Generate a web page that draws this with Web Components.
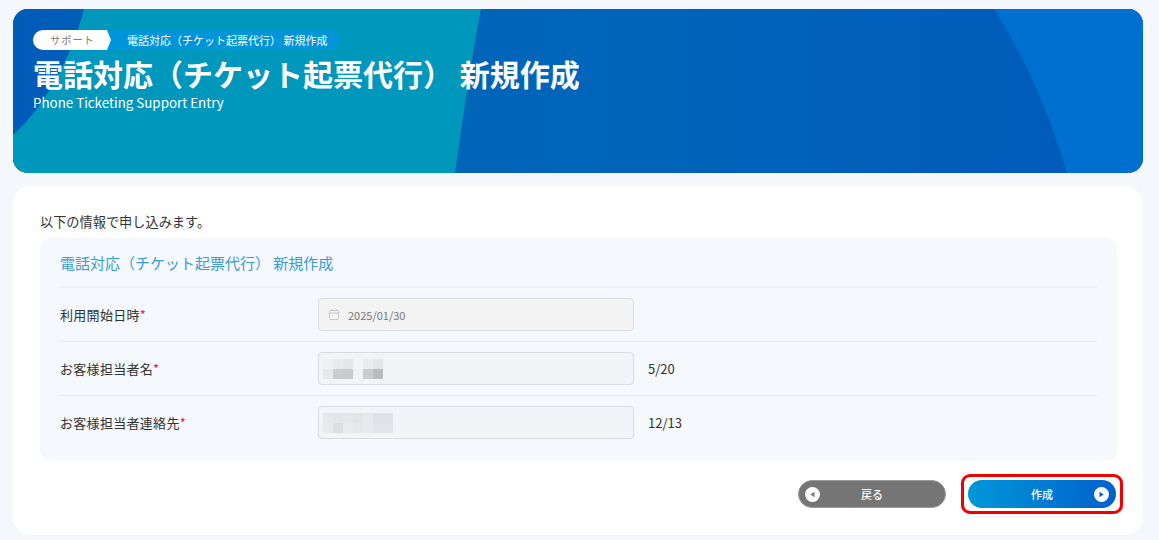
<!DOCTYPE html>
<html lang="ja">
<head>
<meta charset="utf-8">
<title>電話対応（チケット起票代行） 新規作成</title>
<style>
  html, body { margin: 0; height: 100%; }
  body {
    background: #f4f8fc;
    font-family: "Noto Sans CJK JP", "Noto Sans", sans-serif;
    color: #333;
    overflow: hidden;
  }
  #page {
    display: flex;
    flex-direction: column;
    gap: 13px;
    padding: 9px 16px 0 13px;
  }
</style>
</head>
<body>
<div id="page">
  <page-banner crumb="サポート" current="電話対応（チケット起票代行） 新規作成" sub="Phone Ticketing Support Entry">電話対応（チケット起票代行） 新規作成</page-banner>
  <entry-card lead="以下の情報で申し込みます。">
    <form-panel heading="電話対応（チケット起票代行） 新規作成">
      <form-row label="利用開始日時">
        <text-box date value="2025/01/30"></text-box>
      </form-row>
      <form-row label="お客様担当者名" count="5/20">
        <text-box><mosaic-blur cols="6" cells="eef0f1,e8eaeb,e4e6e8,f3f4f5,e9ebec,e3e5e7;e6e8e9,c9cdd0,c7cbce,f1f2f1,c8cccf,b9bcbd"></mosaic-blur></text-box>
      </form-row>
      <form-row label="お客様担当者連絡先" count="12/13">
        <text-box><mosaic-blur cols="7" cells="e6e8eb,e3e6ea,e6e7e9,e2e4e8,e7e9ec,dfe2e6,dfe2e6;e8eaec,dcdfe2,e9ebec,e5e7ea,e8eaed,e2e4e7,e2e4e7"></mosaic-blur></text-box>
      </form-row>
    </form-panel>
    <div slot="actions" style="display:contents">
      <pill-button kind="back">戻る</pill-button>
      <marked-box><pill-button kind="next">作成</pill-button></marked-box>
    </div>
  </entry-card>
</div>

<script>
class PageBanner extends HTMLElement {
  constructor() {
    super();
    this.attachShadow({ mode: 'open' });
    this.shadowRoot.innerHTML = `
      <style>
        :host {
          display: block;
          position: relative;
          height: 164px;
          border-radius: 15px;
          overflow: hidden;
          background: #0060ba;
          color: #fff;
        }
        svg { position: absolute; inset: 0; width: 100%; height: 100%; }
        .content { position: relative; padding: 21px 0 0 20px; }
        .crumbs { display: flex; height: 20px; font-size: 11px; line-height: 20px; }
        .home {
          position: relative;
          z-index: 1;
          width: 74px;
          padding-left: 17px;
          box-sizing: border-box;
          background: #fff;
          color: #808080;
          font-size: 10.5px;
          letter-spacing: .6px;
          border-radius: 10px 0 0 10px;
        }
        .home::after {
          content: "";
          position: absolute;
          left: 100%;
          top: 0;
          border-left: 4px solid #fff;
          border-top: 10px solid transparent;
          border-bottom: 10px solid transparent;
        }
        .now {
          margin-left: -2px;
          padding: 0 14px 0 22px;
          background: #0095d8;
          border-radius: 0 10px 10px 0;
        }
        h1 { margin: 3px 0 0; font-size: 30px; line-height: 40px; font-weight: 700; }
        p { margin: 1px 0 0; font-size: 13.35px; line-height: 18px; }
      </style>
      <svg viewBox="0 0 1130 164" preserveAspectRatio="none" aria-hidden="true">
        <defs>
          <linearGradient id="deep" x1="0" x2="1" y1="0" y2="0">
            <stop offset="0" stop-color="#005cb8"/>
            <stop offset=".5" stop-color="#0066ba"/>
            <stop offset="1" stop-color="#005abb"/>
          </linearGradient>
        </defs>
        <rect width="1130" height="164" fill="url(#deep)"/>
        <path d="M71 0H468C457 55 450 110 442 164H0V126C30 100 58 50 71 0Z" fill="#0097bd"/>
        <path d="M981 0H1130V164H1054C1035 100 1012 50 981 0Z" fill="#0070d0"/>
      </svg>
      <div class="content">
        <div class="crumbs">
          <span class="home">${this.getAttribute('crumb')}</span>
          <span class="now">${this.getAttribute('current')}</span>
        </div>
        <h1><slot></slot></h1>
        <p>${this.getAttribute('sub')}</p>
      </div>
    `;
  }
}

class EntryCard extends HTMLElement {
  constructor() {
    super();
    this.attachShadow({ mode: 'open' });
    this.shadowRoot.innerHTML = `
      <style>
        :host {
          display: block;
          height: 349px;
          box-sizing: border-box;
          padding: 26px 26px 0 27px;
          background: #fff;
          border-radius: 18px;
        }
        .lead { font-size: 13.2px; line-height: 19px; color: #333; margin-bottom: 7px; height: 19px; }
        .actions {
          display: flex;
          justify-content: flex-end;
          align-items: center;
          gap: 15px;
          margin: 13px -6px 0 0;
        }
      </style>
      <div class="lead">${this.getAttribute('lead')}</div>
      <slot></slot>
      <div class="actions"><slot name="actions"></slot></div>
    `;
  }
}

class FormPanel extends HTMLElement {
  constructor() {
    super();
    this.attachShadow({ mode: 'open' });
    this.shadowRoot.innerHTML = `
      <style>
        :host {
          display: block;
          height: 223px;
          box-sizing: border-box;
          padding: 0 20px;
          background: #f5f8fc;
          border-radius: 10px;
        }
        h2 {
          margin: 0;
          height: 50px;
          box-sizing: border-box;
          border-bottom: 2px solid #eef2f6;
          font-size: 15px;
          font-weight: 400;
          line-height: 50px;
          color: #3c9ad6;
        }
      </style>
      <h2>${this.getAttribute('heading')}</h2>
      <slot></slot>
    `;
  }
}

class FormRow extends HTMLElement {
  constructor() {
    super();
    this.attachShadow({ mode: 'open' });
    const count = this.getAttribute('count');
    this.shadowRoot.innerHTML = `
      <style>
        :host {
          display: flex;
          align-items: center;
          height: 54px;
          box-sizing: border-box;
          border-bottom: 1.5px solid #e9ecef;
        }
        :host(:last-child) { border-bottom-color: transparent; }
        .label { width: 258px; font-size: 13px; letter-spacing: .3px; color: #333; }
        .label b { color: #e8204a; font-weight: 400; }
        .count { margin-left: 14px; font-size: 13px; color: #333; }
      </style>
      <div class="label">${this.getAttribute('label')}<b>*</b></div>
      <slot></slot>
      ${count ? `<div class="count">${count}</div>` : ''}
    `;
  }
}

class TextBox extends HTMLElement {
  constructor() {
    super();
    this.attachShadow({ mode: 'open' });
    const isDate = this.hasAttribute('date');
    this.shadowRoot.innerHTML = `
      <style>
        :host {
          display: flex;
          align-items: center;
          gap: 10px;
          width: 316px;
          height: 33px;
          box-sizing: border-box;
          padding: 0 4px;
          background: #f2f4f7;
          border: 1.5px solid #d9dcdf;
          border-radius: 4px;
        }
        :host([date]) { background: #f3f3f3; padding-left: 10px; gap: 9px; }
        svg { width: 10px; height: 11px; flex: none; }
        span { font-size: 11px; color: #777; }
      </style>
      ${isDate ? `<svg viewBox="0 0 10 11" fill="none" stroke="#c8c8c8" aria-hidden="true">
        <rect x=".5" y="1.5" width="9" height="9" rx="1"/>
        <path d="M.5 4h9M3 0v2M7 0v2"/>
      </svg>` : ''}
      ${isDate ? `<span>${this.getAttribute('value')}</span>` : ''}
      <slot></slot>
    `;
  }
}

// stands in for the pixelated personal data
class MosaicBlur extends HTMLElement {
  constructor() {
    super();
    this.attachShadow({ mode: 'open' });
    const rows = this.getAttribute('cells').split(';').map((r) => r.split(','));
    const cells = rows.flat().map((c) => `<i style="background:#${c}"></i>`).join('');
    this.shadowRoot.innerHTML = `
      <style>
        :host {
          display: grid;
          grid-template-columns: repeat(${this.getAttribute('cols')}, 10px);
          grid-auto-rows: 10px;
        }
      </style>
      ${cells}
    `;
  }
}

class PillButton extends HTMLElement {
  constructor() {
    super();
    this.attachShadow({ mode: 'open' });
    const isBack = this.getAttribute('kind') === 'back';
    this.shadowRoot.innerHTML = `
      <style>
        :host {
          display: flex;
          align-items: center;
          justify-content: space-between;
          width: 148px;
          height: 28px;
          box-sizing: border-box;
          padding: 0 7px;
          border-radius: 14px;
          color: #fff;
          font-size: 11px;
          font-weight: 500;
          background: linear-gradient(90deg, #0098d8, #0060cc);
          cursor: pointer;
        }
        :host([kind="back"]) { background: #757575; border: 1px solid #9a9a9a; padding: 0 6px; }
        svg { width: 15px; height: 15px; flex: none; }
        .gap { width: 15px; }
      </style>
      ${isBack ? `<svg viewBox="0 0 15 15" aria-hidden="true"><circle cx="7.5" cy="7.5" r="7.5" fill="#fff"/><path d="M9.5 4.8v5.4L5.3 7.5z" fill="#757575"/></svg>` : '<span class="gap"></span>'}
      <slot></slot>
      ${isBack ? '<span class="gap"></span>' : `<svg viewBox="0 0 15 15" aria-hidden="true"><circle cx="7.5" cy="7.5" r="7.5" fill="#fff"/><path d="M5.5 4.8v5.4l4.2-2.7z" fill="#0062c8"/></svg>`}
    `;
  }
}

// red annotation frame around the button
class MarkedBox extends HTMLElement {
  constructor() {
    super();
    this.attachShadow({ mode: 'open' });
    this.shadowRoot.innerHTML = `
      <style>
        :host {
          display: block;
          padding: 3px 4px;
          border: 3px solid #f00000;
          border-radius: 9px;
          background: #fff;
        }
      </style>
      <slot></slot>
    `;
  }
}

customElements.define('page-banner', PageBanner);
customElements.define('entry-card', EntryCard);
customElements.define('form-panel', FormPanel);
customElements.define('form-row', FormRow);
customElements.define('text-box', TextBox);
customElements.define('mosaic-blur', MosaicBlur);
customElements.define('pill-button', PillButton);
customElements.define('marked-box', MarkedBox);
</script>
</body>
</html>
